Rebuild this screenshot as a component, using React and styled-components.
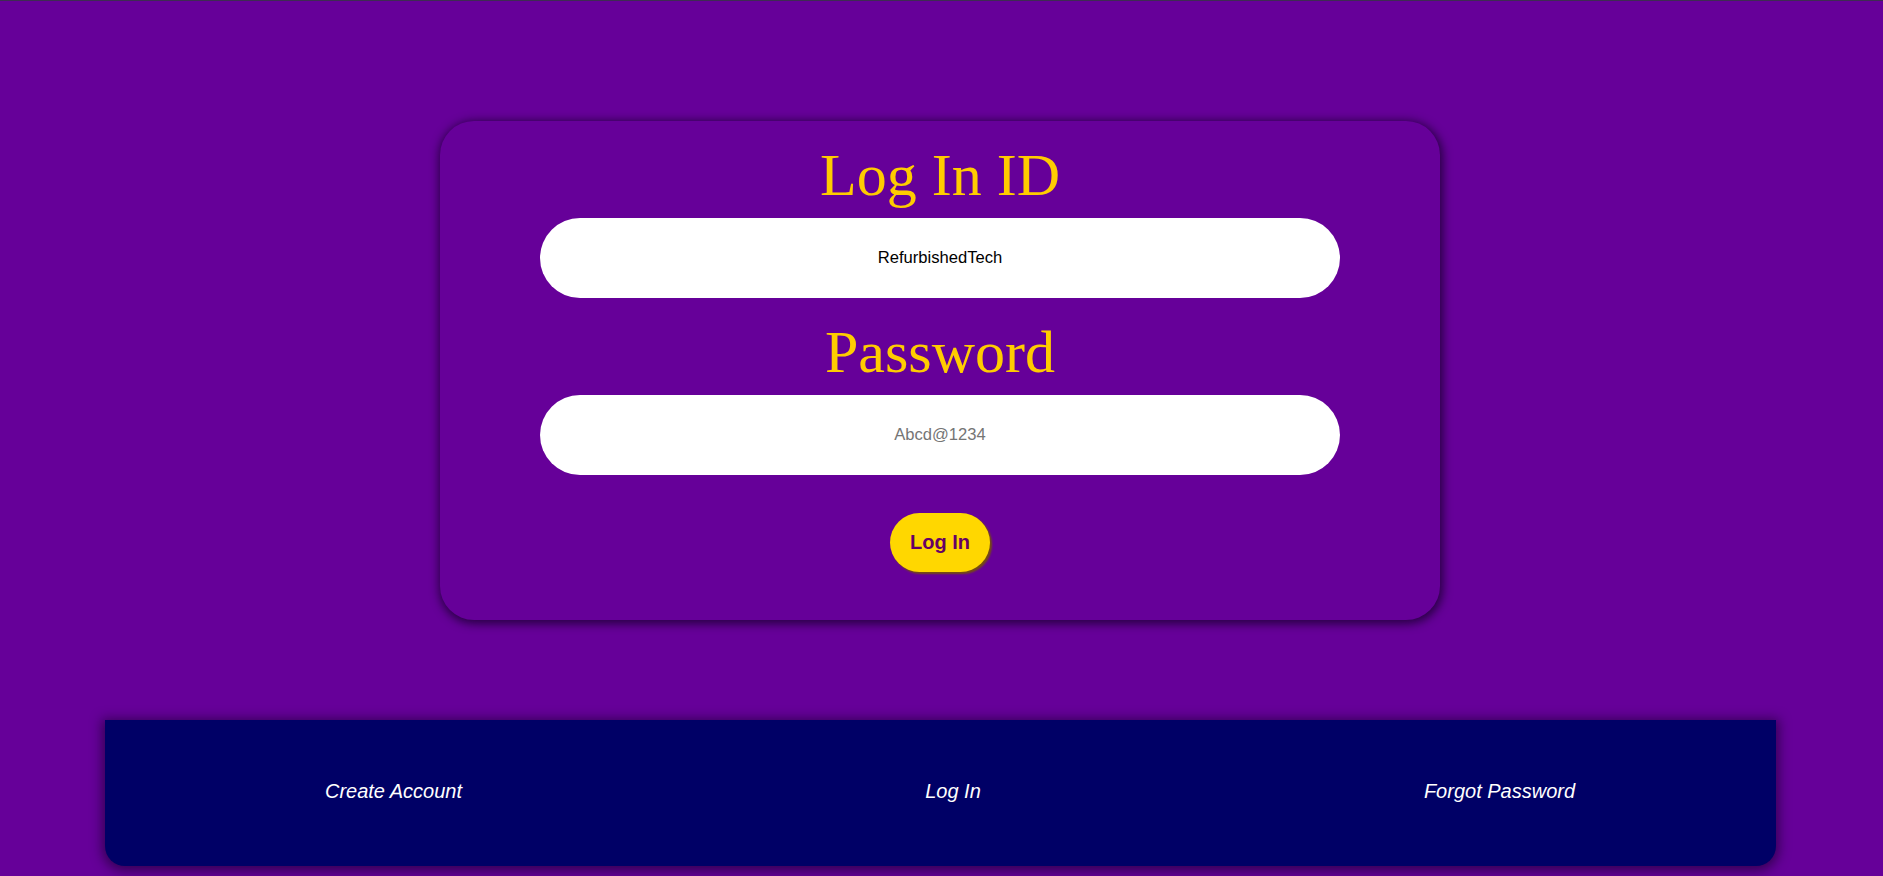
import React, { useState } from 'react';
import styled, { createGlobalStyle } from 'styled-components';

const GlobalStyle = createGlobalStyle`
  html, body {
    margin: 0;
    padding: 0;
    background-color: #660099;
  }
  body {
    font-family: "Liberation Sans", Arial, sans-serif;
    min-height: 876px;
    border-top: 1px solid #3e2c52;
    box-sizing: border-box;
  }
`;

const Page = styled.div`
  display: flex;
  flex-direction: column;
  align-items: center;
  padding: 120px 3px 0 0;
`;

const Card = styled.form`
  width: 1000px;
  box-sizing: border-box;
  display: flex;
  flex-direction: column;
  align-items: center;
  padding: 0 0 48px;
  border-radius: 34px;
  background-color: #660099;
  box-shadow: 1px 2px 10px 2px rgba(20, 0, 40, 0.75);
`;

const Title = styled.h2`
  margin: 20px 0 8px;
  font-family: "Liberation Serif", "Times New Roman", serif;
  font-weight: normal;
  font-size: 60px;
  color: #ffcc00;
`;

const Field = styled.input`
  width: 800px;
  height: 80px;
  box-sizing: border-box;
  border: none;
  outline: none;
  border-radius: 40px;
  background: #ffffff;
  text-align: center;
  font-family: "Liberation Sans", Arial, sans-serif;
  font-size: 16.6px;
  color: #000;

  &::placeholder {
    color: #757575;
  }
`;

const SubmitButton = styled.button`
  margin-top: 38px;
  padding: 18px 20px;
  border: none;
  border-radius: 30px;
  background-color: #ffd700;
  color: #660066;
  font-family: "Liberation Sans", Arial, sans-serif;
  font-weight: bold;
  font-size: 20px;
  box-shadow: 2px 2px 2px rgba(120, 85, 0, 0.9);
  cursor: pointer;
`;

const Footer = styled.footer`
  margin-top: 100px;
  width: 1671px;
  height: 146px;
  box-sizing: border-box;
  padding-bottom: 4px;
  display: grid;
  grid-template-columns: 578px 541px 1fr;
  align-items: center;
  background-color: #000066;
  border-radius: 0 0 20px 20px;
  box-shadow: 0 2px 12px 3px rgba(20, 0, 40, 0.6);
`;

const FooterLink = styled.a`
  text-align: center;
  color: #ffffff;
  font-style: italic;
  font-size: 20px;
  text-decoration: none;
`;

export default function App() {
  const [user, setUser] = useState('RefurbishedTech');
  const [pass, setPass] = useState('');

  return (
    <>
      <GlobalStyle />
      <Page>
        <Card onSubmit={(e) => e.preventDefault()}>
          <Title>Log In ID</Title>
          <Field type="text" value={user} onChange={(e) => setUser(e.target.value)} />
          <Title>Password</Title>
          <Field
            type="password"
            placeholder="Abcd@1234"
            value={pass}
            onChange={(e) => setPass(e.target.value)}
          />
          <SubmitButton type="submit">Log In</SubmitButton>
        </Card>
        <Footer>
          <FooterLink href="#">Create Account</FooterLink>
          <FooterLink href="#">Log In</FooterLink>
          <FooterLink href="#">Forgot Password</FooterLink>
        </Footer>
      </Page>
    </>
  );
}
